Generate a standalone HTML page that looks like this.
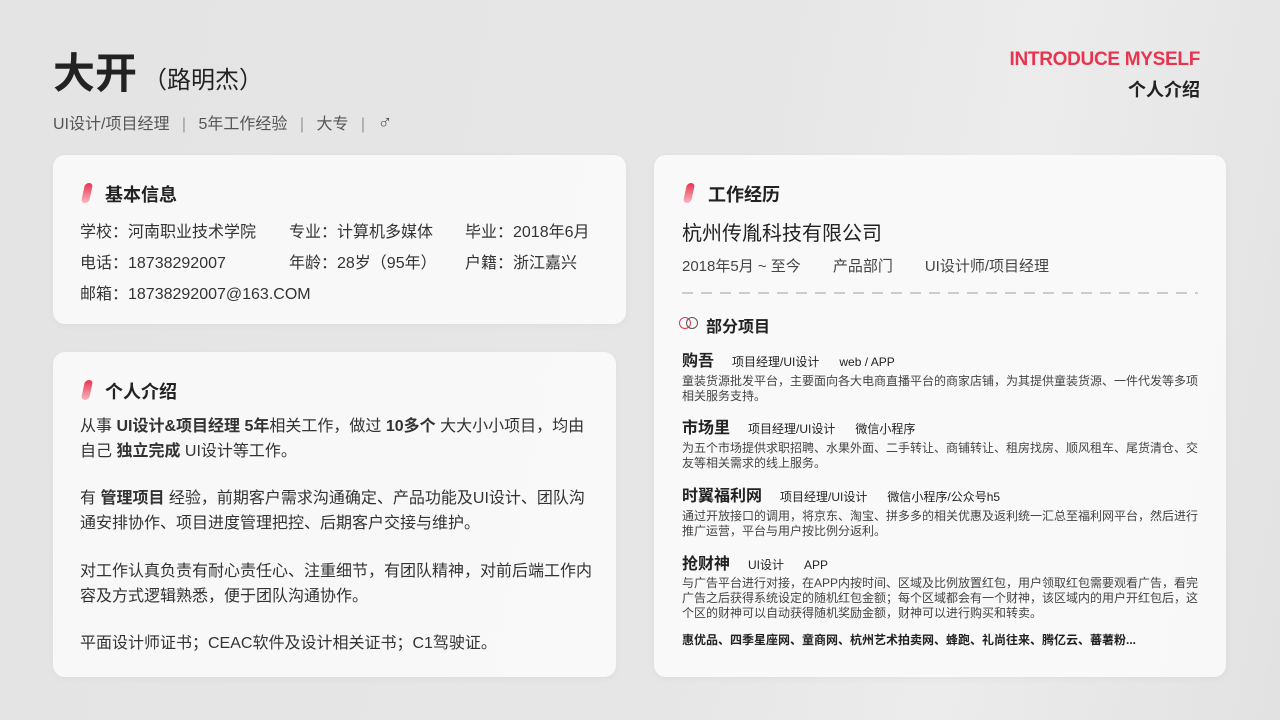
<!DOCTYPE html>
<html><head><meta charset="utf-8"><style>
*{margin:0;padding:0;box-sizing:border-box}
body{width:1280px;height:720px;overflow:hidden;background:linear-gradient(100deg,#e4e4e4 0%,#e6e6e6 55%,#ececec 75%,#e2e2e2 100%);font-family:"Liberation Sans","Noto Sans CJK SC",sans-serif;color:#333;position:relative}
.a{position:absolute;white-space:nowrap}
.card{position:absolute;background:rgba(250,250,250,0.93);border-radius:12px;box-shadow:0 2px 8px rgba(0,0,0,0.04)}
.bar{position:absolute;width:8px;height:20px;border-radius:4px;background:linear-gradient(#e8344e,#f7b7c0);transform:skewX(-12deg)}
.h{font-size:18px;font-weight:bold;color:#222}
.t{font-size:16px;color:#333}
.p{font-size:16px;line-height:25px;color:#333;position:absolute;left:80px;width:515px}
.pt{font-size:16px;font-weight:bold;color:#222}
.pt span{font-size:12px;font-weight:normal;margin-left:18px;color:#222}
.d{position:absolute;left:682px;width:520px;font-size:12px;line-height:15px;color:#444}
</style></head><body>
<div class="a" style="left:53px;top:48px;font-size:42px;font-weight:bold;color:#222;line-height:52px">大开<span style="font-size:24px;font-weight:normal;margin-left:6px">（路明杰）</span></div>
<div class="a" style="left:53px;top:110px;font-size:16px;color:#555">UI设计/项目经理 <span style="color:#999;margin:0 8px">|</span> 5年工作经验 <span style="color:#999;margin:0 8px">|</span> 大专 <span style="color:#999;margin:0 8px">|</span> <span style="font-size:20px">♂</span></div>
<div class="a" style="right:80px;top:49px;font-size:19px;font-weight:bold;color:#e8344e;letter-spacing:-0.3px">INTRODUCE MYSELF</div>
<div class="a" style="right:80px;top:76px;font-size:18px;font-weight:bold;color:#222">个人介绍</div>

<div class="card" style="left:53px;top:155px;width:573px;height:169px"></div>
<div class="bar" style="left:83px;top:183px"></div>
<div class="a h" style="left:105px;top:181px">基本信息</div>
<div class="a t" style="left:80px;top:218px">学校：河南职业技术学院</div>
<div class="a t" style="left:289px;top:218px">专业：计算机多媒体</div>
<div class="a t" style="left:465px;top:218px">毕业：2018年6月</div>
<div class="a t" style="left:80px;top:249px">电话：18738292007</div>
<div class="a t" style="left:289px;top:249px">年龄：28岁（95年）</div>
<div class="a t" style="left:465px;top:249px">户籍：浙江嘉兴</div>
<div class="a t" style="left:80px;top:280px">邮箱：18738292007@163.COM</div>

<div class="card" style="left:53px;top:352px;width:563px;height:325px"></div>
<div class="bar" style="left:83px;top:380px"></div>
<div class="a h" style="left:105px;top:378px">个人介绍</div>
<div class="p" style="top:414px">从事 <b>UI设计&amp;项目经理 5年</b>相关工作，做过 <b>10多个</b> 大大小小项目，均由自己 <b>独立完成</b> UI设计等工作。</div>
<div class="p" style="top:486px">有 <b>管理项目</b> 经验，前期客户需求沟通确定、产品功能及UI设计、团队沟通安排协作、项目进度管理把控、后期客户交接与维护。</div>
<div class="p" style="top:559px">对工作认真负责有耐心责任心、注重细节，有团队精神，对前后端工作内容及方式逻辑熟悉，便于团队沟通协作。</div>
<div class="p" style="top:631px">平面设计师证书；CEAC软件及设计相关证书；C1驾驶证。</div>

<div class="card" style="left:654px;top:155px;width:572px;height:522px"></div>
<div class="bar" style="left:685px;top:183px"></div>
<div class="a h" style="left:708px;top:181px">工作经历</div>
<div class="a" style="left:682px;top:217px;font-size:20px;color:#222">杭州传胤科技有限公司</div>
<div class="a" style="left:682px;top:255px;font-size:15px;color:#444">2018年5月 ~ 至今<span style="margin-left:32px">产品部门</span><span style="margin-left:32px">UI设计师/项目经理</span></div>
<div class="a" style="left:682px;top:292px;width:516px;height:2px;background:repeating-linear-gradient(90deg,#ccc 0 11px,transparent 11px 19px)"></div>
<div class="a" style="left:679px;top:317px;width:12px;height:12px;border:1.5px solid #e8344e;border-radius:50%"></div>
<div class="a" style="left:686px;top:317px;width:12px;height:12px;border:1.5px solid #555;border-radius:50%"></div>
<div class="a" style="left:706px;top:313px;font-size:16px;font-weight:bold;color:#222">部分项目</div>
<div class="a pt" style="left:682px;top:347px">购吾<span>项目经理/UI设计</span><span style="margin-left:20px">web / APP</span></div>
<div class="d" style="top:374px">童装货源批发平台，主要面向各大电商直播平台的商家店铺，为其提供童装货源、一件代发等多项相关服务支持。</div>
<div class="a pt" style="left:682px;top:414px">市场里<span>项目经理/UI设计</span><span style="margin-left:20px">微信小程序</span></div>
<div class="d" style="top:441px">为五个市场提供求职招聘、水果外面、二手转让、商铺转让、租房找房、顺风租车、尾货清仓、交友等相关需求的线上服务。</div>
<div class="a pt" style="left:682px;top:482px">时翼福利网<span>项目经理/UI设计</span><span style="margin-left:20px">微信小程序/公众号h5</span></div>
<div class="d" style="top:509px">通过开放接口的调用，将京东、淘宝、拼多多的相关优惠及返利统一汇总至福利网平台，然后进行推广运营，平台与用户按比例分返利。</div>
<div class="a pt" style="left:682px;top:550px">抢财神<span>UI设计</span><span style="margin-left:20px">APP</span></div>
<div class="d" style="top:576px">与广告平台进行对接，在APP内按时间、区域及比例放置红包，用户领取红包需要观看广告，看完广告之后获得系统设定的随机红包金额；每个区域都会有一个财神，该区域内的用户开红包后，这个区的财神可以自动获得随机奖励金额，财神可以进行购买和转卖。</div>
<div class="a" style="left:682px;top:631px;font-size:12px;font-weight:bold;color:#222">惠优品、四季星座网、童商网、杭州艺术拍卖网、蜂跑、礼尚往来、腾亿云、蕃薯粉...</div>
</body></html>
